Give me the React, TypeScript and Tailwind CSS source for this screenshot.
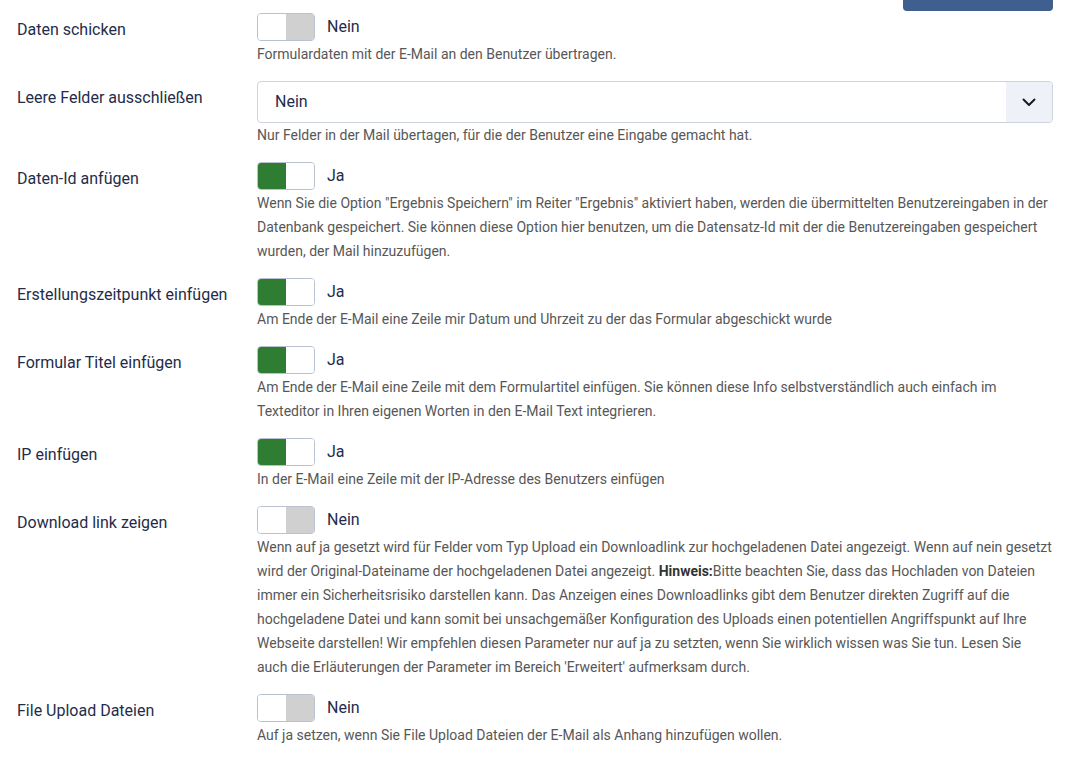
import React from "react";

type Row =
  | { label: string; kind: "switch"; on: boolean; desc: React.ReactNode }
  | { label: string; kind: "select"; value: string; desc: React.ReactNode };

const rows: Row[] = [
  {
    label: "Daten schicken",
    kind: "switch",
    on: false,
    desc: "Formulardaten mit der E-Mail an den Benutzer übertragen.",
  },
  {
    label: "Leere Felder ausschließen",
    kind: "select",
    value: "Nein",
    desc: "Nur Felder in der Mail übertagen, für die der Benutzer eine Eingabe gemacht hat.",
  },
  {
    label: "Daten-Id anfügen",
    kind: "switch",
    on: true,
    desc: 'Wenn Sie die Option "Ergebnis Speichern" im Reiter "Ergebnis" aktiviert haben, werden die übermittelten Benutzereingaben in der Datenbank gespeichert. Sie können diese Option hier benutzen, um die Datensatz-Id mit der die Benutzereingaben gespeichert wurden, der Mail hinzuzufügen.',
  },
  {
    label: "Erstellungszeitpunkt einfügen",
    kind: "switch",
    on: true,
    desc: "Am Ende der E-Mail eine Zeile mir Datum und Uhrzeit zu der das Formular abgeschickt wurde",
  },
  {
    label: "Formular Titel einfügen",
    kind: "switch",
    on: true,
    desc: "Am Ende der E-Mail eine Zeile mit dem Formulartitel einfügen. Sie können diese Info selbstverständlich auch einfach im Texteditor in Ihren eigenen Worten in den E-Mail Text integrieren.",
  },
  {
    label: "IP einfügen",
    kind: "switch",
    on: true,
    desc: "In der E-Mail eine Zeile mit der IP-Adresse des Benutzers einfügen",
  },
  {
    label: "Download link zeigen",
    kind: "switch",
    on: false,
    desc: (
      <>
        Wenn auf ja gesetzt wird für Felder vom Typ Upload ein Downloadlink zur hochgeladenen Datei angezeigt. Wenn auf nein gesetzt
        wird der Original-Dateiname der hochgeladenen Datei angezeigt. <b className="font-bold text-[#333]">Hinweis:</b>Bitte
        beachten Sie, dass das Hochladen von Dateien immer ein Sicherheitsrisiko darstellen kann. Das Anzeigen eines Downloadlinks
        gibt dem Benutzer direkten Zugriff auf die hochgeladene Datei und kann somit bei unsachgemäßer Konfiguration des Uploads
        einen potentiellen Angriffspunkt auf Ihre Webseite darstellen! Wir empfehlen diesen Parameter nur auf ja zu setzten, wenn
        Sie wirklich wissen was Sie tun. Lesen Sie auch die Erläuterungen der Parameter im Bereich 'Erweitert' aufmerksam durch.
      </>
    ),
  },
  {
    label: "File Upload Dateien",
    kind: "switch",
    on: false,
    desc: "Auf ja setzen, wenn Sie File Upload Dateien der E-Mail als Anhang hinzufügen wollen.",
  },
];

function Switch({ on }: { on: boolean }) {
  return (
    <div className="flex h-[29px] items-start">
      <div className="flex h-[28px] w-[58px] overflow-hidden rounded-[4px] border border-[#b9c2ce]">
        <div className={on ? "w-1/2 bg-[#2e7d32]" : "w-1/2 bg-white"} />
        <div className={on ? "w-1/2 bg-white" : "w-1/2 bg-[#d0d0d0]"} />
      </div>
      <span className="ml-[12px] text-[16px] leading-[28px] text-[#1f2d4a]">{on ? "Ja" : "Nein"}</span>
    </div>
  );
}

function Select({ value }: { value: string }) {
  return (
    <div className="flex h-[42px] overflow-hidden rounded-[4px] border border-[#cdd4df] bg-white">
      <div className="flex flex-1 items-center pl-[17px] text-[16px] text-[#1f2d4a]">{value}</div>
      <div className="flex w-[46px] items-center justify-center bg-[#eef2f8]">
        <svg width="14" height="9" viewBox="0 0 14 9" fill="none">
          <path d="M1.5 1.5 7 7l5.5-5.5" stroke="#1b1b1b" strokeWidth="2" strokeLinecap="round" strokeLinejoin="round" />
        </svg>
      </div>
    </div>
  );
}

export default function App() {
  return (
    <div className="min-h-[781px] bg-white pl-[17px] pr-[14px] font-['Roboto',sans-serif]">
      <div className="flex justify-end">
        <div className="h-[11px] w-[150px] rounded-b-[4px] bg-[#3f5f8e]" />
      </div>
      <div className="flex flex-col gap-[15px] pt-[2px]">
        {rows.map((row) => (
          <div key={row.label} className="flex">
            <div className="w-[240px] shrink-0 pt-[5px] text-[16px] leading-[24px] text-[#1f2d4a]">{row.label}</div>
            <div className="min-w-0 flex-1">
              {row.kind === "switch" ? <Switch on={row.on} /> : <Select value={row.value} />}
              <div className="text-[14px] leading-[24px] text-[#575757]">{row.desc}</div>
            </div>
          </div>
        ))}
      </div>
    </div>
  );
}
